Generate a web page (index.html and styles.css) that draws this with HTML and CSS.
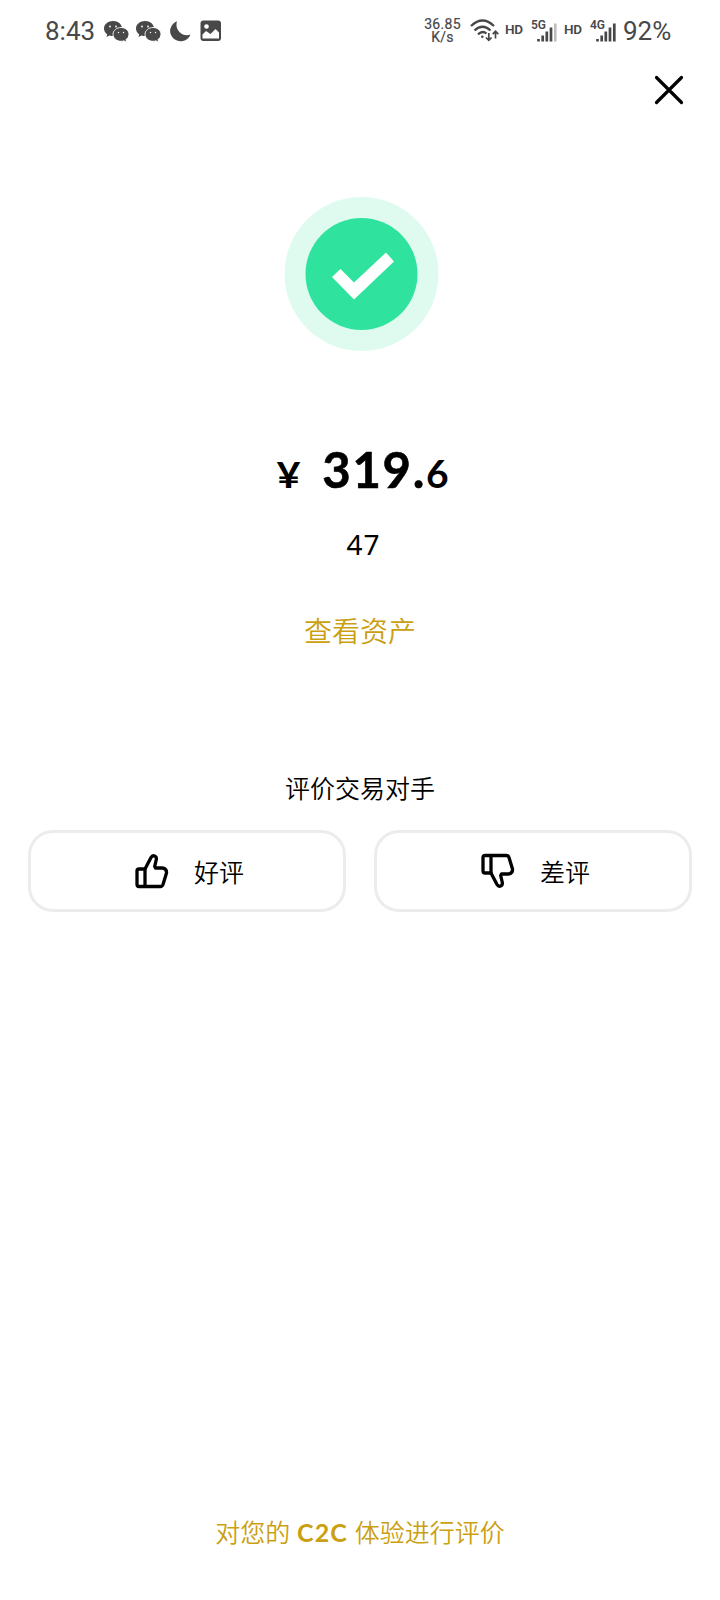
FILE: index.html
```html
<!DOCTYPE html>
<html lang="zh-CN">
<head>
<meta charset="utf-8">
<meta name="viewport" content="width=device-width">
<title>评价交易对手</title>
<link rel="stylesheet" href="styles.css">
</head>
<body>
<svg class="defs" width="0" height="0" aria-hidden="true">
  <symbol id="chat" viewBox="0 0 25 22">
    <path fill="#484848" d="M9 0C4 0 0 3.300 0 7.500C0 9.900 1.200 11.900 3.200 13.300L2.400 16L5.500 14.500Q7 15 9 15Q14 15 16.500 11.500Q18 9.500 18 7.300C18 3.200 14 0 9 0Z"/>
    <path fill="#484848" stroke="#fff" stroke-width=".9" d="M17 6.500C12.800 6.500 9 9.400 9 13.300S12.800 20.300 17 20.300Q18.600 20.300 20 19.800L22.800 21.500L22 18.700Q25 16.700 25 13.300C25 9.400 21.200 6.500 17 6.500Z"/>
    <g fill="#fff"><circle cx="6" cy="5.500" r=".9"/><circle cx="12" cy="5.500" r=".9"/><circle cx="14.500" cy="11.500" r=".7"/><circle cx="19.500" cy="11.500" r=".7"/></g>
  </symbol>
  <symbol id="bars" viewBox="0 0 21 19">
    <path fill="none" stroke="#484848" stroke-width="2.700" d="M1.500 16V18.500M5.700 12.500V18.500M9.800 8.500V18.500M14 4.500V18.500"/>
  </symbol>
</svg>

<header class="status">
  <div class="status-left">
    <span class="clock">8:43</span>
    <svg class="chat" width="25" height="22"><use href="#chat"/></svg>
    <svg class="chat" width="25" height="22"><use href="#chat"/></svg>
    <svg class="moon" width="21" height="21" viewBox="0 0 21 21"><path fill="#484848" d="M7 .3A10.500 10.300 0 1 0 20.500 13.500C16.500 15 12.500 14 9.700 11.200C6.500 8 5.800 4 7 .3Z"/></svg>
    <svg class="photo" width="22" height="22" viewBox="0 0 22 22"><rect x=".5" y=".5" width="20.500" height="20.500" rx="3" fill="#484848"/><circle cx="6.500" cy="6.500" r="2.300" fill="#fff"/><path fill="#fff" d="M2.500 18.500V14.500L6 11L10.500 14L15.500 9L19 12.500V18.500Z"/></svg>
  </div>
  <div class="status-right">
    <div class="speed"><span>36.85</span><span>K/s</span></div>
    <svg class="wifi" width="30" height="24" viewBox="0 0 30 24"><g fill="none" stroke="#484848" stroke-width="2.300"><path d="M1 7Q12.500-4 24 7M4.500 11.500Q12.500 4 20.500 11.500M8 15.300Q12.500 11 16.500 14.500"/><path stroke-width="1.700" d="M18.800 14V21M16 18.500L18.800 21.400L21.600 18.500M25.500 19.500V12.500M22.700 15.200L25.500 12.300L28.300 15.200"/></g><circle cx="12.300" cy="17.800" r="1.300" fill="#484848"/></svg>
    <span class="hd">HD</span>
    <span class="signal"><b>5G</b><svg width="21" height="19" viewBox="0 0 21 19"><use href="#bars" width="21" height="19"/><path d="M18.300 .5V18.500" stroke="#bdbdbd" stroke-width="2.600"/></svg></span>
    <span class="hd hd-second">HD</span>
    <span class="signal"><b>4G</b><svg width="21" height="19" viewBox="0 0 21 19"><use href="#bars" width="21" height="19"/><path d="M18.300 .5V18.500" stroke="#484848" stroke-width="2.700"/></svg></span>
    <span class="battery">92%</span>
  </div>
</header>

<nav class="top">
  <svg width="30" height="30" viewBox="0 0 30 30"><path d="M2.500 2.500L27.500 27.500M27.500 2.500L2.500 27.500" stroke="#000" stroke-width="3.200" stroke-linecap="round"/></svg>
</nav>

<main class="result">
  <svg class="success" width="156" height="156" viewBox="0 0 156 156"><circle cx="78.500" cy="78" r="77" fill="#dffbf0"/><circle cx="78.500" cy="78" r="56" fill="#2fe39f"/><path fill="#fff" d="M49 81L57.500 73L71 86.500L103 56.500L111 65.500L71 103.500Z"/></svg>
  <div class="amount"><span class="yen">¥</span><span class="whole">319.</span><span class="cents">6</span></div>
  <div class="quantity">47</div>
  <a class="assets">查看资产</a>
</main>

<section class="rating">
  <h2>评价交易对手</h2>
  <div class="choices">
    <button class="choice">
      <svg width="34" height="36" viewBox="0 0 34 36"><g fill="none" stroke="#000" stroke-width="3.300" stroke-linejoin="round"><path d="M10 16L16 4.500Q17.500 2 20 3.200Q21.800 4.300 21.300 6.500L19.700 13.500L20.500 15H27.500Q32 15.500 31.500 20L28 31.500Q27.300 33.500 25.500 33.500H4Q2 33.500 2 31.500V18Q2 16 4 16Z"/><path d="M10 16V33.500"/></g></svg>
      <span>好评</span>
    </button>
    <button class="choice">
      <svg width="34" height="36" viewBox="0 0 34 36"><g transform="translate(0 36) scale(1 -1)" fill="none" stroke="#000" stroke-width="3.300" stroke-linejoin="round"><path d="M10 16L16 4.500Q17.500 2 20 3.200Q21.800 4.300 21.300 6.500L19.700 13.500L20.500 15H27.500Q32 15.500 31.500 20L28 31.500Q27.300 33.500 25.500 33.500H4Q2 33.500 2 31.500V18Q2 16 4 16Z"/><path d="M10 16V33.500"/></g></svg>
      <span>差评</span>
    </button>
  </div>
</section>

<footer class="feedback">对您的 <b>C2C</b> 体验进行评价</footer>
</body>
</html>
```

FILE: styles.css
```css
* { box-sizing: border-box; }
body {
  margin: 0;
  width: 720px;
  height: 1600px;
  display: flex;
  flex-direction: column;
  background: #fff;
  color: #000;
  font-family: "Noto Sans", "Noto Sans CJK SC", sans-serif;
  overflow: hidden;
}
svg { display: block; flex: none; }
.defs { position: absolute; }

.status {
  height: 60px;
  padding: 0 49px 0 45px;
  display: flex;
  justify-content: space-between;
  align-items: center;
  color: #484848;
  font-family: Roboto, sans-serif;
  line-height: 1;
}
.status-left, .status-right { display: flex; align-items: center; }
.clock { width: 59px; font-size: 26px; padding-top: 1px; }
.chat { margin: 3px 7px 0 0; }
.moon { margin: 2px 9px 0 2px; }
.photo { margin-top: 2px; }
.speed {
  width: 37px;
  display: flex;
  flex-direction: column;
  align-items: center;
  gap: 1px;
  font-size: 14px;
  line-height: 12px;
  letter-spacing: .3px;
  -webkit-text-stroke: .2px #484848;
}
.wifi { margin: 2px 0 0 9px; }
.hd { width: 19px; margin-left: 5px; font-size: 13.500px; font-weight: 600; letter-spacing: -.2px; }
.hd-second { margin-left: 6px; }
.signal { width: 27px; height: 22px; margin: 2px 0 0 7px; display: grid; }
.signal b { grid-area: 1 / 1; font-size: 12px; line-height: 10px; font-weight: 600; }
.signal svg { grid-area: 1 / 1; align-self: end; justify-self: end; }
.battery { width: 48px; margin-left: 6px; font-size: 26px; padding-top: 1px; }

.top { height: 60px; padding: 15px 36px 0 0; display: flex; justify-content: flex-end; }

.result { display: flex; flex-direction: column; align-items: center; padding-top: 76px; }
.success { margin-left: 2px; }
.amount {
  height: 60px;
  margin-top: 87px;
  padding-left: 7px;
  display: flex;
  align-items: baseline;
  font-family: Lato, sans-serif;
  font-weight: 700;
  line-height: 60px;
}
.yen { width: 26px; font-size: 37px; margin-right: 18px; transform: scaleX(1.12); }
.whole { font-size: 49px; letter-spacing: 1.700px; -webkit-text-stroke: .6px #000; }
.cents { font-size: 39px; }
.quantity { height: 40px; margin-top: 25px; padding-left: 7px; font-size: 28px; line-height: 40px; letter-spacing: 1px; }
.assets { height: 40px; margin-top: 46px; color: #cb9f12; font-family: "Noto Sans CJK SC", sans-serif; font-size: 28px; font-weight: 350; line-height: 40px; }

.rating { margin-top: 117px; font-family: "Noto Sans CJK SC", sans-serif; }
.rating h2 { margin: 0; font-size: 25px; line-height: 40px; font-weight: 350; text-align: center; }
.choices { display: flex; gap: 28px; padding: 23px 28px 0; }
.choice {
  flex: 1;
  height: 82px;
  padding: 0 0 0 5px;
  display: flex;
  align-items: center;
  justify-content: center;
  gap: 25px;
  border: 3px solid #ececec;
  border-radius: 25px;
  background: #fff;
  color: #000;
  font: inherit;
  font-size: 25px;
  font-weight: 350;
}

.feedback {
  margin-top: auto;
  height: 87px;
  color: #cb9f12;
  font-family: "Noto Sans CJK SC", sans-serif;
  font-size: 25px;
  font-weight: 350;
  line-height: 36px;
  text-align: center;
}
.feedback b { margin: 0 1px; font-family: Lato, sans-serif; font-weight: 700; letter-spacing: 1.200px; }
```
